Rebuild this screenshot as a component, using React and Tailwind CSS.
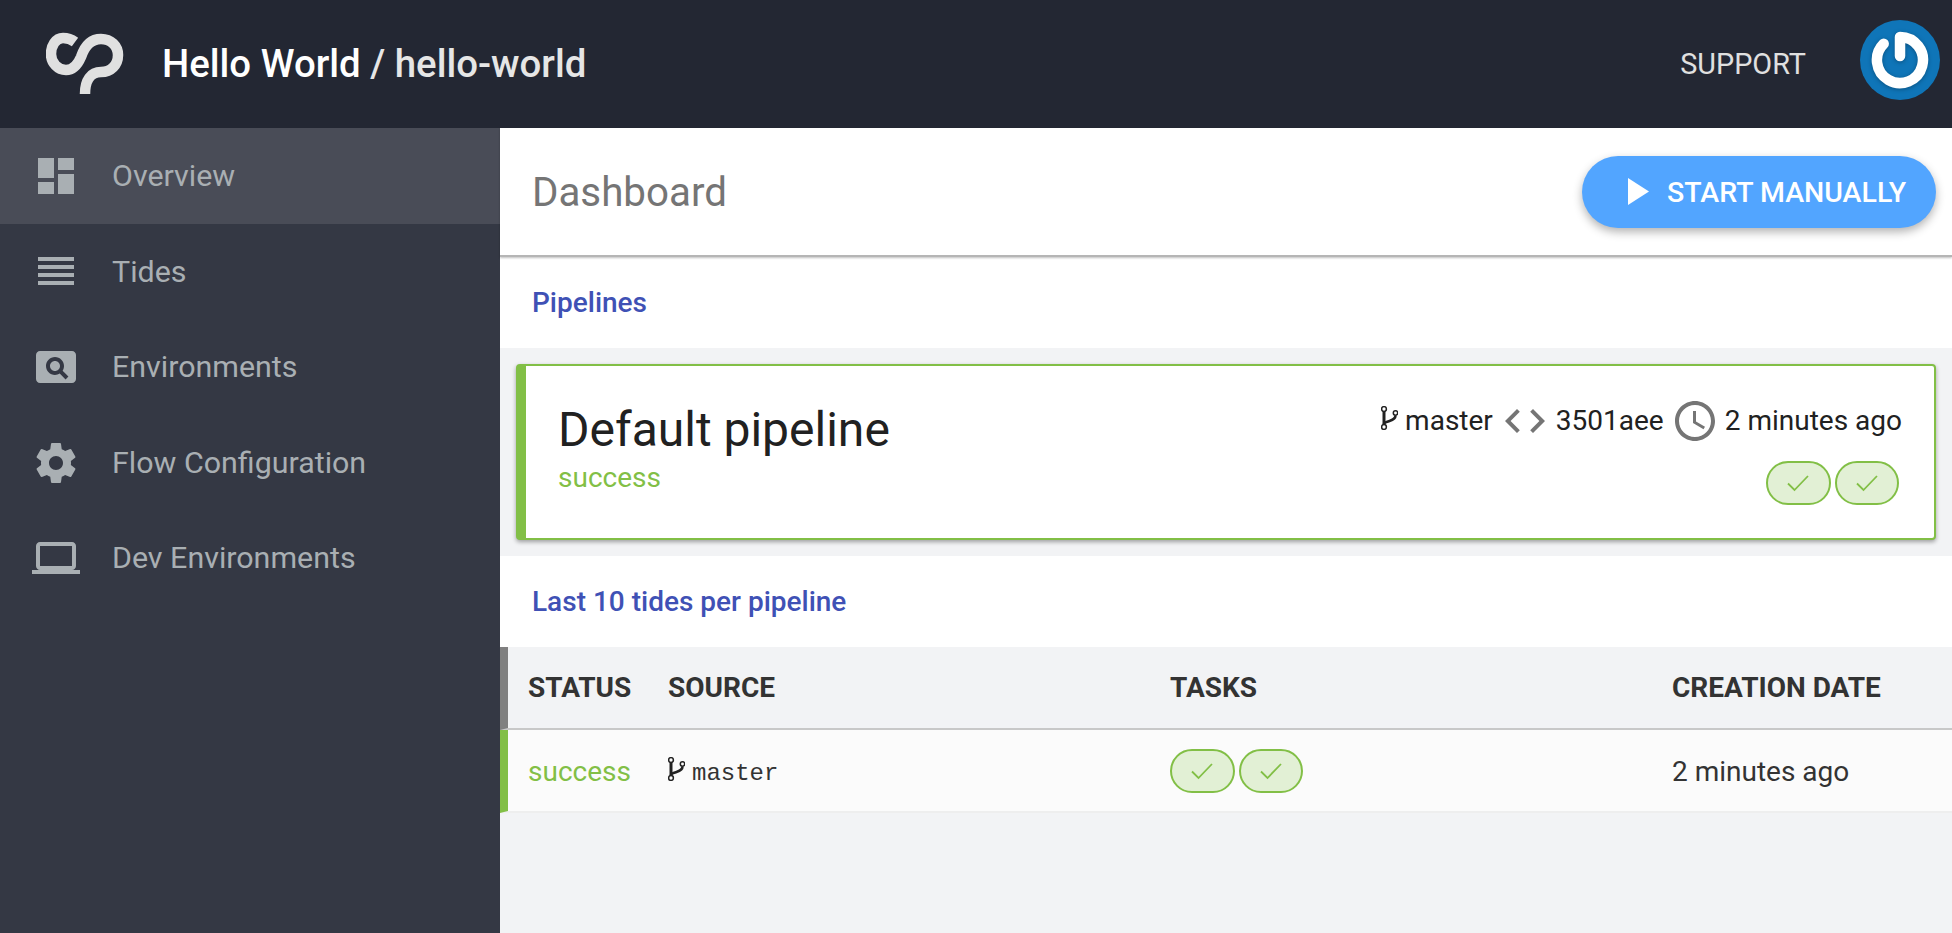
const icons = {
  dashboard: 'M3 13h8V3H3v10zm0 8h8v-6H3v6zm10 0h8V11h-8v10zm0-18v6h8V3h-8z',
  tides: 'M3 15h18v-2H3v2zm0 4h18v-2H3v2zm0-8h18V9H3v2zm0-6v2h18V5H3z',
  pageview: 'M11.5 9C10.12 9 9 10.12 9 11.5s1.12 2.5 2.5 2.5 2.5-1.12 2.5-2.5S12.88 9 11.5 9zM20 4H4c-1.1 0-2 .9-2 2v12c0 1.1.9 2 2 2h16c1.1 0 2-.9 2-2V6c0-1.1-.9-2-2-2zm-3.21 14.21l-2.91-2.91c-.69.44-1.51.7-2.39.7C9.01 16 7 13.99 7 11.5S9.01 7 11.5 7 16 9.01 16 11.5c0 .88-.26 1.69-.7 2.39l2.91 2.9-1.42 1.42z',
  settings: 'M19.43 12.98c.04-.32.07-.64.07-.98s-.03-.66-.07-.98l2.11-1.65c.19-.15.24-.42.12-.64l-2-3.46c-.12-.22-.39-.3-.61-.22l-2.49 1c-.52-.4-1.08-.73-1.69-.98l-.38-2.65C14.46 2.18 14.25 2 14 2h-4c-.25 0-.46.18-.49.42l-.38 2.65c-.61.25-1.17.59-1.69.98l-2.49-1c-.23-.09-.49 0-.61.22l-2 3.46c-.13.22-.07.49.12.64l2.11 1.65c-.04.32-.07.65-.07.98s.03.66.07.98l-2.11 1.65c-.19.15-.24.42-.12.64l2 3.46c.12.22.39.3.61.22l2.49-1c.52.4 1.08.73 1.69.98l.38 2.65c.03.24.24.42.49.42h4c.25 0 .46-.18.49-.42l.38-2.65c.61-.25 1.17-.59 1.69-.98l2.49 1c.23.09.49 0 .61-.22l2-3.46c.12-.22.07-.49-.12-.64l-2.11-1.65zM12 15.5c-1.93 0-3.5-1.57-3.5-3.5s1.57-3.5 3.5-3.5 3.5 1.57 3.5 3.5-1.57 3.5-3.5 3.5z',
  laptop: 'M20 18c1.1 0 1.99-.9 1.99-2L22 6c0-1.1-.9-2-2-2H4c-1.1 0-2 .9-2 2v10c0 1.1.9 2 2 2H0v2h24v-2h-4zM4 6h16v10H4V6z',
}

const navItems = [
  { label: 'Overview', icon: icons.dashboard, active: true },
  { label: 'Tides', icon: icons.tides },
  { label: 'Environments', icon: icons.pageview },
  { label: 'Flow Configuration', icon: icons.settings },
  { label: 'Dev Environments', icon: icons.laptop },
]

function Logo() {
  return (
    <svg width="80" height="64" viewBox="0 0 80 64" fill="none" className="shrink-0">
      <path d="M29 10C25 7 21 6 17 6C9.5 6 5 14 5 22C5 31 12 38 20 38C27 38 32 32 35 25C38 16 44 7 55 7C65 7 72 14 72 23C72 33 65 40 55 40C45 40 39 48 39 62" stroke="#e0e0e0" strokeWidth="10.5" />
    </svg>
  )
}

function PowerAvatar() {
  return (
    <svg width="80" height="80" viewBox="0 0 80 80" className="mb-[8px] shrink-0">
      <circle cx="40" cy="40" r="40" fill="#0f75b8" />
      <path d="M23.7 23.7A23 23 0 1 0 40 17V36" fill="none" stroke="#ffffff" strokeWidth="10.5" strokeLinecap="round" strokeLinejoin="round" className="drop-shadow-[0_1px_2px_rgba(0,0,0,0.3)]" />
    </svg>
  )
}

function BranchIcon({ className }) {
  return (
    <svg viewBox="0 0 17 24" width="17" height="24" fill="none" stroke="#222222" strokeWidth="1.5" className={className}>
      <circle cx="3" cy="3" r="2.4" />
      <circle cx="3" cy="21" r="2.4" />
      <circle cx="14.5" cy="7" r="2.2" />
      <path d="M3 5.5v13" strokeWidth="3" />
      <path d="M14.5 9.5c0 3.5-3 4.500-6 5.500-3 1-5.500 1.500-5.500 3" strokeWidth="2.6" />
    </svg>
  )
}

function TaskPills() {
  return (
    <div className="flex gap-[4px]">
      {[0, 1].map((i) => (
        <div key={i} className="flex h-[44px] w-[64.5px] items-center justify-center rounded-[22px] border-2 border-[#82bf46] bg-[#e2f0d5]">
          <svg width="24" height="24" viewBox="0 0 24 24" fill="none" stroke="#82bf46" strokeWidth="1.8">
            <path d="M2 12.500l6.500 6.500L22 5" />
          </svg>
        </div>
      ))}
    </div>
  )
}

export default function App() {
  return (
    <div className="flex h-[933px] flex-col overflow-hidden bg-[#f2f3f5] font-['Roboto',sans-serif]">
      <header className="flex h-[128px] shrink-0 items-center bg-[#232733] pl-[46px] pr-[12px]">
        <Logo />
        <h1 className="ml-[36px] text-[38.4px] font-medium text-[#e6e6e6]"><span className="text-white">Hello World</span> / hello-world</h1>
        <span className="ml-auto mr-[54px] pt-[2px] text-[28.8px] text-[#e0e0e0]">SUPPORT</span>
        <PowerAvatar />
      </header>
      <div className="flex flex-1">
        <aside className="w-[500px] shrink-0 bg-[#343844]">
          {navItems.map((item) => (
            <div key={item.label} className={`flex h-[95.6px] items-center pl-[32px] ${item.active ? 'bg-[#494c57]' : ''}`}>
              <svg width="48" height="48" viewBox="0 0 24 24" fill="#a9afb3"><path d={item.icon} /></svg>
              <span className="ml-[32px] text-[30.4px] text-[#a9afb3]">{item.label}</span>
            </div>
          ))}
        </aside>
        <main className="flex-1">
          <div className="relative flex h-[129px] items-center justify-between border-b-2 border-[#b5b5b5] bg-white pl-[32px] pr-[16px] shadow-[0_1px_2px_rgba(0,0,0,0.25)]">
            <h2 className="pt-[3px] text-[40.3px] text-[#757575]">Dashboard</h2>
            <button className="flex h-[72px] w-[354px] items-center rounded-[36px] bg-[#52a5ff] pl-[46px] text-[28.5px] font-medium text-white shadow-[0_4px_10px_rgba(0,0,0,0.3)]">
              <svg width="21" height="27" viewBox="0 0 21 27" fill="#ffffff"><path d="M0 0l21 13.500L0 27z" /></svg>
              <span className="ml-[18px] pt-[3px]">START MANUALLY</span>
            </button>
          </div>
          <div className="flex h-[91px] items-center bg-white pl-[32px] text-[28px] font-medium text-[#3f51b5]">Pipelines</div>
          <div className="h-[208px] bg-[#f2f3f5] p-[16px]">
            <div className="flex h-[176px] justify-between rounded-[4px] border-2 border-l-[10px] border-[#82bf46] bg-white pl-[32px] pr-[32px] shadow-[0_2px_4px_rgba(0,0,0,0.35)]">
              <div className="pt-[34px]">
                <div className="text-[48px] leading-[60px] text-[#212121]">Default pipeline</div>
                <div className="text-[28px] leading-[36px] text-[#82bf46]">success</div>
              </div>
              <div className="flex flex-col items-end pt-[31px]">
                <div className="flex items-center text-[28px] text-[#212121]">
                  <BranchIcon className="mb-[6px]" />
                  <span className="ml-[7px]">master</span>
                  <svg width="48" height="48" viewBox="0 0 24 24" fill="#757575" className="ml-[8px]"><path d="M9.4 16.6L4.8 12l4.6-4.6L8 6l-6 6 6 6 1.4-1.4zm5.2 0l4.6-4.6-4.600-4.600L16 6l6 6-6 6-1.400-1.400z" /></svg>
                  <span className="ml-[7px]">3501aee</span>
                  <svg width="48" height="48" viewBox="0 0 24 24" fill="#757575" className="ml-[7px]"><path d="M11.99 2C6.47 2 2 6.48 2 12s4.47 10 9.99 10C17.52 22 22 17.52 22 12S17.52 2 11.99 2zM12 20c-4.42 0-8-3.58-8-8s3.58-8 8-8 8 3.58 8 8-3.58 8-8 8zm.5-13H11v6l5.25 3.15.75-1.23-4.5-2.67z" /></svg>
                  <span className="ml-[6px]">2 minutes ago</span>
                </div>
                <div className="mr-[3px] mt-[16px]"><TaskPills /></div>
              </div>
            </div>
          </div>
          <div className="flex h-[91px] items-center bg-white pl-[32px] text-[28px] font-medium text-[#3f51b5]">Last 10 tides per pipeline</div>
          <div className="grid h-[83px] grid-cols-[132px_510px_502px_1fr] items-center border-b-2 border-l-8 border-b-[#c8c8c8] border-l-[#808080] bg-[#f2f3f5] pl-[20px] text-[28px] font-bold text-[#333333]">
            <span>STATUS</span>
            <span className="pl-[8px]">SOURCE</span>
            <span>TASKS</span>
            <span>CREATION DATE</span>
          </div>
          <div className="grid h-[83px] grid-cols-[132px_510px_502px_1fr] items-center border-b-2 border-l-8 border-b-[#eeeeee] border-l-[#82bf46] bg-[#fbfbfb] pl-[20px] text-[28px]">
            <span className="pt-[2px] text-[#82bf46]">success</span>
            <span className="flex items-center pl-[8px]">
              <BranchIcon className="mb-[3px]" />
              <span className="ml-[7px] pt-[6px] font-['Liberation_Mono',monospace] text-[24px] text-[#333333]">master</span>
            </span>
            <TaskPills />
            <span className="pt-[2px] text-[#333333]">2 minutes ago</span>
          </div>
        </main>
      </div>
    </div>
  )
}
